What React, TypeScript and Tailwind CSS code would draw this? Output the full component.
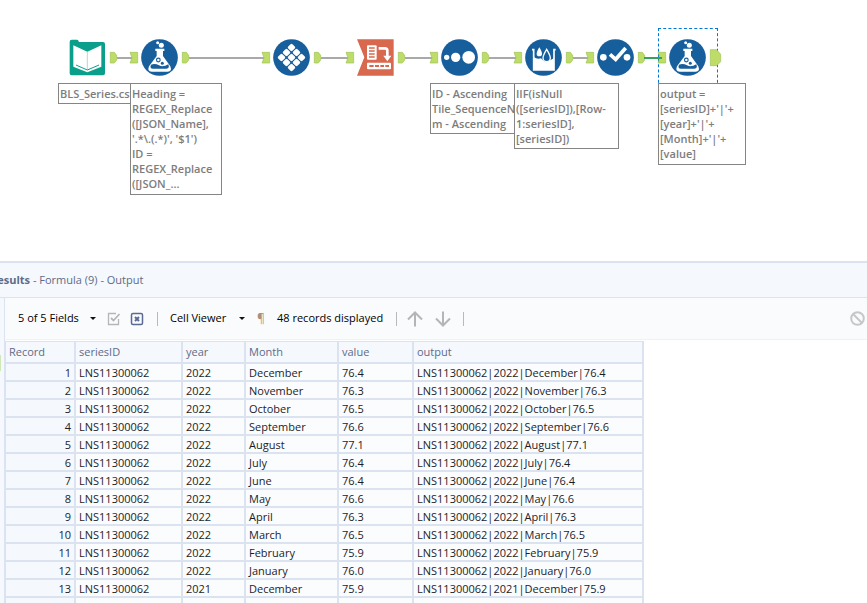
import React from 'react';

type ToolKind = 'input' | 'formula' | 'tile' | 'crosstab' | 'sort' | 'multirow' | 'select';

interface Tool {
  kind: ToolKind;
  name: string;
  position: string;
  hasInput: boolean;
  selected?: boolean;
}

interface Annotation {
  id: string;
  className: string;
  lines: string[];
}

const tools: Tool[] = [
  { kind: 'input', name: 'Input Data', position: 'left-[69px]', hasInput: false },
  { kind: 'formula', name: 'Formula', position: 'left-[141px]', hasInput: true },
  { kind: 'tile', name: 'Tile', position: 'left-[273px]', hasInput: true },
  { kind: 'crosstab', name: 'Cross Tab', position: 'left-[357px]', hasInput: true },
  { kind: 'sort', name: 'Sort', position: 'left-[441px]', hasInput: true },
  { kind: 'multirow', name: 'Multi-Row Formula', position: 'left-[525px]', hasInput: true },
  { kind: 'select', name: 'Select', position: 'left-[597px]', hasInput: true },
  { kind: 'formula', name: 'Formula (9)', position: 'left-[669px]', hasInput: true, selected: true },
];

const annotations: Annotation[] = [
  { id: 'file', className: 'left-[58px] w-[84px] h-[21px]', lines: ['BLS_Series.csv'] },
  {
    id: 'heading',
    className: 'left-[130px] w-[92px] h-[112px]',
    lines: ['Heading =', 'REGEX_Replace', '([JSON_Name],', "'.*\\.(.*)', '$1')", 'ID =', 'REGEX_Replace', '([JSON_...'],
  },
  {
    id: 'sort',
    className: 'left-[430px] w-[92px] h-[51px]',
    lines: ['ID - Ascending', 'Tile_SequenceNu', 'm - Ascending'],
  },
  {
    id: 'multirow',
    className: 'left-[514px] w-[105px] h-[66px]',
    lines: ['IIF(isNull', '([seriesID]),[Row-', '1:seriesID],', '[seriesID])'],
  },
  {
    id: 'output',
    className: 'left-[658px] w-[88px] h-[82px]',
    lines: ['output =', "[seriesID]+'|'+", "[year]+'|'+", "[Month]+'|'+", '[value]'],
  },
];

const connections = [
  [117, 132],
  [189, 264],
  [321, 348],
  [405, 432],
  [489, 516],
  [573, 588],
];

const records = [
  ['2022', 'December', '76.4'],
  ['2022', 'November', '76.3'],
  ['2022', 'October', '76.5'],
  ['2022', 'September', '76.6'],
  ['2022', 'August', '77.1'],
  ['2022', 'July', '76.4'],
  ['2022', 'June', '76.4'],
  ['2022', 'May', '76.6'],
  ['2022', 'April', '76.3'],
  ['2022', 'March', '76.5'],
  ['2022', 'February', '75.9'],
  ['2022', 'January', '76.0'],
  ['2021', 'December', '75.9'],
];

const SERIES_ID = 'LNS11300062';

const tileCenters = [-1, 0, 1].flatMap((a) => [-1, 0, 1].map((b) => [55.5 + (a - b) * 15, 55.5 + (a + b) * 15]));

// All tool glyphs share a 111 x 111 grid
const ToolGlyph: React.FC<{ kind: ToolKind }> = ({ kind }) => {
  switch (kind) {
    case 'input':
      return (
        <>
          <path d="M2 8 Q2 2 8 2 H24 Q28 2 30 9 H102 Q108 9 108 15 V103 Q108 109 102 109 H8 Q2 109 2 103 Z" fill="#0a9f8b" />
          <path d="M13 19 L55 38 L97 19 V83 L55 100 L13 83 Z" fill="#fff" />
          <path d="M55 38 V92" stroke="#7fcabf" strokeWidth="2" />
          <path d="M21 78 L55 93 L90 78" fill="none" stroke="#0a9f8b" strokeWidth="3" />
        </>
      );
    case 'formula':
      return (
        <>
          <path d="M43 29 H70 V36 H66 V51 L88 82 Q94 98 80 98 H32 Q18 98 24 82 L47 51 V36 H43 Z" fill="#fff" />
          <path d="M30 77 Q42 72 54 79 Q66 86 82 76 Q87 89 76 89 H36 Q25 89 30 77 Z" fill="#165f9c" />
          <circle cx="52" cy="63" r="5.5" fill="none" stroke="#165f9c" strokeWidth="3.5" />
          <circle cx="64" cy="73" r="4.5" fill="#165f9c" />
          <circle cx="61" cy="19" r="7.5" fill="#fff" />
          <circle cx="50" cy="11" r="4.5" fill="#fff" />
        </>
      );
    case 'tile':
      return (
        <>
          {tileCenters.map(([x, y]) => (
            <rect key={`${x}-${y}`} x={x - 9} y={y - 9} width="18" height="18" rx="4" fill="#fff" transform={`rotate(45 ${x} ${y})`} />
          ))}
        </>
      );
    case 'crosstab':
      return (
        <>
          <path d="M0 1 H110 V110 H0 L22 55 Z" fill="#d8684e" />
          <rect x="30" y="19" width="29" height="43" rx="3" fill="#fff" />
          <path d="M36 27 H53 M36 36 H53 M36 45 H53 M36 54 H53" stroke="#d8684e" strokeWidth="4" />
          <path d="M65 28 H84 Q91 28 91 35 V54" fill="none" stroke="#fff" strokeWidth="8" />
          <path d="M79 50 H103 L91 67 Z" fill="#fff" />
          <rect x="30" y="71" width="72" height="20" rx="3" fill="#fff" />
          <path d="M37 81 H50 M54 81 H66 M70 81 H81 M85 81 H96" stroke="#d8684e" strokeWidth="6" />
        </>
      );
    case 'sort':
      return (
        <>
          <circle cx="17" cy="55" r="8" fill="#fff" />
          <circle cx="44" cy="55" r="14" fill="#fff" />
          <circle cx="83" cy="55" r="19" fill="#fff" />
        </>
      );
    case 'multirow':
      return (
        <>
          <path d="M21 32 H26 V93 H87 V32 H92" fill="none" stroke="#fff" strokeWidth="5" />
          <path d="M26 54 Q36 62 48 58 Q60 76 78 62 Q83 60 87 56 V93 H26 Z" fill="#fff" />
          <path d="M43 25 Q51 38 51 44 A8 8 0 0 1 35 44 Q35 38 43 25 Z" fill="#fff" />
          <path d="M65 31 Q76 49 76 57 A11 11 0 0 1 54 57 Q54 49 65 31 Z" fill="#165f9c" stroke="#fff" strokeWidth="4" />
        </>
      );
    case 'select':
      return (
        <>
          <circle cx="19" cy="55" r="10" fill="#fff" />
          <circle cx="90" cy="55" r="10" fill="#fff" />
          <path d="M39 46 L56 61 L86 27" fill="none" stroke="#fff" strokeWidth="11" />
        </>
      );
  }
};

const ToolNode: React.FC<{ tool: Tool }> = ({ tool }) => {
  const round = tool.kind !== 'input' && tool.kind !== 'crosstab';
  return (
    <div className={`absolute top-[39px] size-[37px] ${tool.position}`}>
      <svg viewBox="0 0 111 111" className="size-full overflow-visible" role="img" aria-label={tool.name}>
        {tool.hasInput && <path d="M-33 40 H-10 V72 H-33 L-27 56 Z" fill="#bddd68" stroke="#9fc157" strokeWidth="2" />}
        {tool.selected ? (
          <path d="M124 32 H143 L155 46 V68 L143 80 H124 Z" fill="#bddd68" stroke="#9fc157" strokeWidth="2" />
        ) : (
          <path d="M124 40 H136 L143 49 V63 L136 72 H124 Z" fill="#bddd68" stroke="#9fc157" strokeWidth="2" />
        )}
        {round && <circle cx="55.5" cy="55.5" r="55" fill="#165f9c" />}
        <ToolGlyph kind={tool.kind} />
      </svg>
    </div>
  );
};

const Canvas: React.FC = () => (
  <section aria-label="Workflow" className="relative h-[261px] shrink-0 overflow-hidden bg-white">
    <div className="absolute left-[658px] top-[28px] h-[60px] w-[60px] border border-dashed border-[#0078d7]" />
    <svg className="absolute inset-0 size-full" aria-hidden="true">
      {connections.map(([from, to]) => (
        <path key={from} d={`M${from} 58 H${to}`} stroke="#a9a9a9" strokeWidth="2" />
      ))}
    </svg>
    {tools.map((tool) => (
      <ToolNode key={tool.position} tool={tool} />
    ))}
    <svg className="absolute inset-0 size-full" aria-hidden="true">
      <path d="M644 58 H662" stroke="#36a35c" strokeWidth="2" />
    </svg>
    {annotations.map((note) => (
      <div
        key={note.id}
        className={`absolute top-[83px] overflow-hidden border border-[#858585] bg-white px-px py-0.5 text-[11px] leading-[15px] font-semibold whitespace-nowrap text-[#7d7d7d] ${note.className}`}
      >
        {note.lines.map((line, i) => (
          <div key={i}>{line}</div>
        ))}
      </div>
    ))}
  </section>
);

const Caret: React.FC = () => (
  <svg viewBox="0 0 6 3" className="h-[3px] w-1.5" aria-hidden="true">
    <path d="M0 0 H6 L3 3 Z" fill="#111" />
  </svg>
);

const Divider: React.FC = () => <span className="h-3.5 w-px bg-[#b9b9b9]" />;

const Toolbar: React.FC = () => (
  <div className="flex h-[42px] items-center border-b border-[#f0f1f4] bg-[#fafbfd] pl-[13px] text-[11px] text-black">
    <button type="button" className="flex w-[89px] items-center justify-between pr-[11px] whitespace-nowrap">
      5 of 5 Fields
      <Caret />
    </button>
    <button type="button" aria-label="Select all" className="w-[23px]">
      <svg viewBox="0 0 14 14" className="size-3.5" fill="none" stroke="#b4b6ba">
        <path d="M9 1.5 H1.5 V12.5 H11.5 V7" strokeWidth="1.3" />
        <path d="M4 6 L6.5 8.5 L12.5 2" strokeWidth="1.8" />
      </svg>
    </button>
    <button type="button" aria-label="Clear selection" className="w-[27px]">
      <svg viewBox="0 0 14 14" className="size-3.5" fill="none" stroke="#5b6a92">
        <rect x="1.5" y="1.5" width="11" height="11" rx="1.5" strokeWidth="1.5" />
        <path d="M5 5 L9 9 M9 5 L5 9" strokeWidth="2" />
      </svg>
    </button>
    <Divider />
    <button type="button" className="ml-3 flex w-[87px] items-center justify-between pr-3 whitespace-nowrap">
      Cell Viewer
      <Caret />
    </button>
    <button type="button" aria-label="Show whitespace" className="w-5 text-left text-xs text-[#a98f7d]">
      ¶
    </button>
    <span className="w-[119px] whitespace-nowrap">48 records displayed</span>
    <Divider />
    <button type="button" aria-label="Previous" className="ml-2.5 w-7">
      <svg viewBox="0 0 16 16" className="size-4" fill="none" stroke="#b5b5b5" strokeWidth="2">
        <path d="M8 15.5 V1.5 M1 8.5 L8 1.5 L15 8.5" />
      </svg>
    </button>
    <button type="button" aria-label="Next" className="w-7">
      <svg viewBox="0 0 16 16" className="size-4" fill="none" stroke="#b5b5b5" strokeWidth="2">
        <path d="M8 0.5 V14.5 M1 7.5 L8 14.5 L15 7.5" />
      </svg>
    </button>
    <Divider />
    <button type="button" aria-label="Cancel" className="mr-0.5 ml-auto">
      <svg viewBox="0 0 15 15" className="size-[15px]" fill="none" stroke="#c6c7c9" strokeWidth="2">
        <circle cx="7.5" cy="7.5" r="6.3" />
        <path d="M3 3 L12 12" />
      </svg>
    </button>
  </div>
);

const cell = 'h-[18px] border-r-2 border-b-2 border-[#dbe3f1] px-[3px] pt-0.5 pb-0 leading-[14px]';
const headCell = 'h-[22px] border-r-2 border-b-2 border-[#dbe3f1] px-[3px] py-0 text-left font-normal leading-5';

const ResultsTable: React.FC = () => (
  <table className="mt-px w-[639px] table-fixed border-separate border-spacing-0 border-t border-l border-[#dbe3f1] text-[11px] whitespace-nowrap">
    <colgroup>
      <col className="w-[70px]" />
      <col className="w-[107px]" />
      <col className="w-[63px]" />
      <col className="w-[93px]" />
      <col className="w-[75px]" />
      <col />
    </colgroup>
    <thead className="bg-[#f5f8fd] text-[#5f6b88]">
      <tr>
        <th className={headCell}>Record</th>
        <th className={headCell}>seriesID</th>
        <th className={headCell}>year</th>
        <th className={headCell}>Month</th>
        <th className={headCell}>value</th>
        <th className={headCell}>output</th>
      </tr>
    </thead>
    <tbody className="bg-[#fbfcfe] text-[#1c1c28]">
      {records.map(([year, month, value], i) => (
        <tr key={i}>
          <td className={`${cell} bg-[#f5f8fd] text-right`}>{i + 1}</td>
          <td className={cell}>{SERIES_ID}</td>
          <td className={cell}>{year}</td>
          <td className={cell}>{month}</td>
          <td className={cell}>{value}</td>
          <td className={cell}>{[SERIES_ID, year, month, value].join('|')}</td>
        </tr>
      ))}
      <tr>
        <td className={`${cell} bg-[#f5f8fd]`} />
        <td className={cell} />
        <td className={cell} />
        <td className={cell} />
        <td className={cell} />
        <td className={cell} />
      </tr>
    </tbody>
  </table>
);

export default function App() {
  return (
    <main className="flex h-screen flex-col overflow-hidden bg-white font-['Open_Sans','Noto_Sans',sans-serif]">
      <Canvas />
      <section aria-label="Results" className="flex min-h-0 flex-1 flex-col overflow-hidden border-t-2 border-[#dbe3f1]">
        <header className="flex h-[35px] shrink-0 items-center border-b border-[#dbe3f1] bg-[#f5f8fd] text-[11px] text-[#5f6b88]">
          <h2 className="-ml-2.5 whitespace-pre">
            <b>Results</b> - Formula (9) - Output
          </h2>
        </header>
        <div className="flex min-h-0 flex-1">
          <div className="w-1 shrink-0 bg-[#f5f8fd] pt-[57px]">
            <div className="h-4 w-px bg-[#cfe8b8]" />
          </div>
          <div className="min-w-0 flex-1 overflow-hidden border-l border-[#dbe3f1]">
            <Toolbar />
            <ResultsTable />
          </div>
        </div>
      </section>
    </main>
  );
}
